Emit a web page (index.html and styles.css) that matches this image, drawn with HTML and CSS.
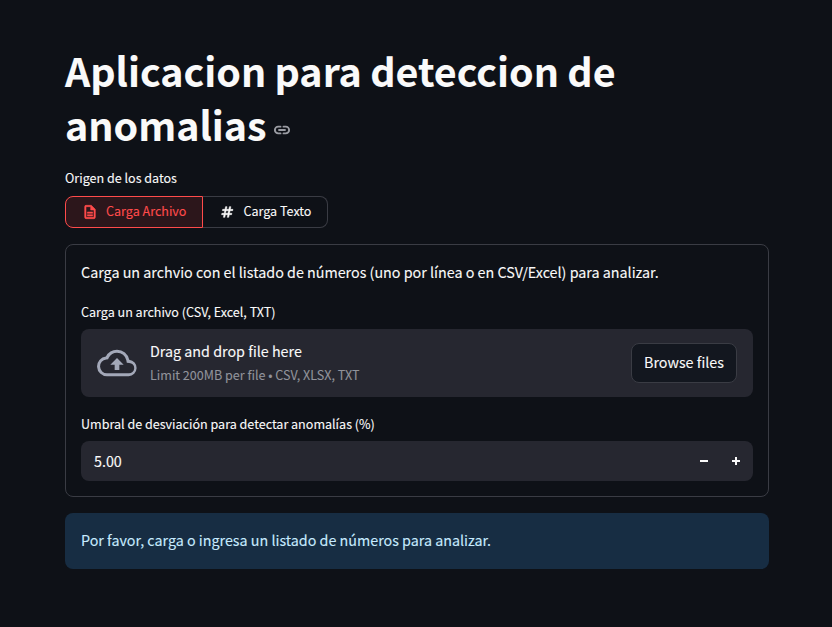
FILE: index.html
```html
<!DOCTYPE html>
<html lang="es">
<head>
    <meta charset="UTF-8">
    <meta name="viewport" content="width=device-width, initial-scale=1.0">
    <title>Aplicacion para deteccion de anomalias</title>
    <link rel="stylesheet" href="styles.css">
</head>
<body>
    <main class="container">
        <h1 class="title">Aplicacion para deteccion de anomalias <svg class="link-icon" viewBox="0 0 24 24" fill="none" stroke="currentColor" stroke-width="2.5" stroke-linecap="round"><path d="M10 7.5H7a4.5 4.5 0 0 0 0 9h3"/><path d="M14 7.5h3a4.5 4.5 0 0 1 0 9h-3"/><path d="M8 12h8"/></svg></h1>

        <p class="label">Origen de los datos</p>
        <div class="tabs">
            <button class="tab tab-active">
                <svg class="tab-icon" viewBox="0 0 24 24" fill="currentColor"><path fill-rule="evenodd" d="M14 2H6a2 2 0 0 0-2 2v16a2 2 0 0 0 2 2h12a2 2 0 0 0 2-2V8zm4 18H6V4h7v5h5zM8 12h8v2H8zm0 4h8v2H8z"/></svg>
                <span class="tab-text">Carga Archivo</span>
            </button>
            <button class="tab">
                <svg class="tab-icon" viewBox="0 0 24 24" fill="currentColor"><path fill-rule="evenodd" d="M20.5 10l.4-2H17l.8-4h-2.200l-.8 4h-3.600l.8-4H9.800L9 8H5.500l-.4 2H8.600l-.8 4H4.300l-.4 2h3.500l-.8 4h2.200l.8-4h3.600l-.8 4h2.200l.8-4h3.500l.4-2h-3.500l.8-4zM13.400 14H9.800l.8-4h3.600z"/></svg>
                <span class="tab-text">Carga Texto</span>
            </button>
        </div>

        <section class="card">
            <p class="intro">Carga un archvio con el listado de números (uno por línea o en CSV/Excel) para analizar.</p>

            <p class="label">Carga un archivo (CSV, Excel, TXT)</p>
            <div class="dropzone">
                <svg class="cloud" viewBox="0 0 24 24" fill="currentColor"><path fill-rule="evenodd" d="M19.35 10.04A7.49 7.49 0 0 0 12 4a7.500 7.500 0 0 0-6.650 4.040A6 6 0 0 0 6 20h13a5 5 0 0 0 .35-9.960zM19 18.200H6a4.200 4.200 0 0 1-.45-8.370l1.100-.12.500-.95A5.700 5.700 0 0 1 12 5.800a5.700 5.700 0 0 1 5.590 4.590l.29 1.430 1.460.11A3.100 3.100 0 0 1 19 18.200z"/><path d="M8 13l4-4 4 4h-2.600v3.200h-2.800V13z"/></svg>
                <div class="drop-text">
                    <span class="drop-title">Drag and drop file here</span>
                    <span class="drop-limit">Limit 200MB per file • CSV, XLSX, TXT</span>
                </div>
                <button class="browse">Browse files</button>
            </div>

            <p class="label label-number">Umbral de desviación para detectar anomalías (%)</p>
            <div class="number-input">
                <span class="number-value">5.00</span>
                <span class="step"><svg viewBox="0 0 10 10" fill="currentColor"><rect x="1" y="4" width="8" height="2"/></svg></span>
                <span class="step"><svg viewBox="0 0 10 10" fill="currentColor"><rect x="1" y="4" width="8" height="2"/><rect x="4" y="1" width="2" height="8"/></svg></span>
            </div>
        </section>

        <div class="alert">Por favor, carga o ingresa un listado de números para analizar.</div>
    </main>
</body>
</html>
```

FILE: styles.css
```css
body {
    font-family: "Noto Sans CJK JP", "Noto Sans", sans-serif;
    margin: 0;
    padding: 0;
    background-color: #0e1117;
    color: #fafafa;
    -webkit-text-stroke: 0.1px;
}
.container {
    width: 704px;
    padding-top: 43px;
    margin-left: 65px;
}
.title {
    margin: 0 0 17px;
    font-size: 39.4px;
    font-weight: 700;
    line-height: 54px;
    word-spacing: -0.6px;
}
.link-icon {
    width: 18px;
    height: 18px;
    margin-left: -2px;
    color: #9a9ca3;
    vertical-align: 2px;
}
.label {
    margin: 0 0 8px;
    font-size: 12.55px;
    line-height: 20px;
}
.tabs {
    display: flex;
    margin-bottom: 16px;
}
.tab {
    display: flex;
    align-items: center;
    gap: 8px;
    height: 32px;
    padding: 0 16px;
    border: 1px solid #3a3c44;
    border-left: none;
    border-radius: 0 8px 8px 0;
    background: transparent;
    color: #fafafa;
    font-family: inherit;
    font-size: 12.55px;
    white-space: nowrap;
}
.tab-active {
    border: 1px solid #ff4b4b;
    border-radius: 8px 0 0 8px;
    background: #2c161b;
    color: #ff4b4b;
}
.tab-text {
    padding-bottom: 4px;
}
.tab-icon {
    width: 16px;
    height: 16px;
    stroke: currentColor;
    stroke-width: 0.8;
}
.card {
    border: 1px solid #3a3c44;
    border-radius: 8px;
    padding: 15px;
    margin-bottom: 16px;
}
.card .label {
    margin-bottom: 7px;
}
.intro {
    margin: 0 0 18px;
    font-size: 14.32px;
    line-height: 24px;
}
.dropzone {
    display: flex;
    align-items: center;
    height: 68px;
    padding: 0 16px;
    border-radius: 8px;
    background: #262730;
}
.cloud {
    width: 40px;
    height: 40px;
    color: #a3a8b8;
    margin-right: 13px;
}
.drop-text {
    display: flex;
    flex-direction: column;
    flex: 1;
    padding-bottom: 1px;
}
.drop-title {
    font-size: 14.3px;
    line-height: 24px;
}
.drop-limit {
    font-size: 12.55px;
    line-height: 24px;
    color: #91939b;
}
.browse {
    height: 40px;
    width: 106px;
    padding: 0 0 3px;
    border: 1px solid #3a3c44;
    border-radius: 8px;
    background: #13171f;
    color: #fafafa;
    font-family: inherit;
    font-size: 14.3px;
}
.card .label-number {
    margin-top: 17px;
}
.number-input {
    display: flex;
    align-items: center;
    height: 40px;
    padding: 0 1px 0 13px;
    border-radius: 8px;
    background: #262730;
}
.number-value {
    flex: 1;
    font-size: 14.3px;
    padding-bottom: 2px;
}
.step {
    display: flex;
    align-items: center;
    justify-content: center;
    width: 32px;
    height: 40px;
}
.step svg {
    width: 10px;
    height: 10px;
}
.alert {
    height: 56px;
    box-sizing: border-box;
    padding: 14px 16px;
    border-radius: 8px;
    background: #172d43;
    color: #c7ebff;
    font-size: 14.3px;
    line-height: 26px;
}
```
